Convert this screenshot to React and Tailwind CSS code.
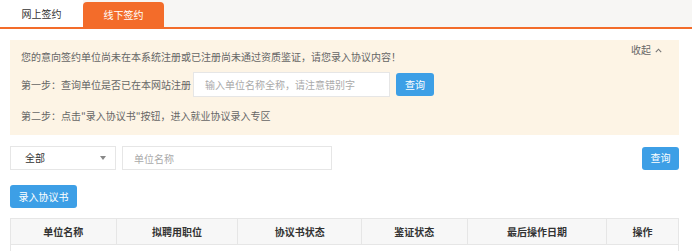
import React from 'react';

const columns = [
  { title: '单位名称', width: 'w-[106px]' },
  { title: '拟聘用职位', width: 'w-[122px]' },
  { title: '协议书状态', width: 'w-[124px]' },
  { title: '鉴证状态', width: 'w-[106px]' },
  { title: '最后操作日期', width: 'w-[140px]' },
  { title: '操作', width: 'w-[71px]' },
];

const App = () => {
  return (
    <div className="w-[692px] h-[251px] overflow-hidden bg-white text-[10px] leading-[14px] text-[#666] font-['Noto_Sans_CJK_SC',sans-serif]">
      {/* Tabs */}
      <div className="flex h-[29px] bg-[#f7f6f4] border-b-2 border-[#f36c2a]">
        <div className="w-[83px] h-[27px] bg-white flex items-center justify-center text-[#333]">网上签约</div>
        <div className="w-[81px] h-[25px] mt-[2px] bg-[#f36c2a] rounded-t-[4px] flex items-center justify-center text-white">线下签约</div>
      </div>

      <div className="ml-[10px] w-[669px]">
        {/* Notice */}
        <div className="relative mt-[11px] h-[95px] bg-[#fdf4e5] pl-[11px] pt-[10px]">
          <div className="absolute top-[3px] right-[17px] flex items-center gap-[4px] text-[#666]">
            <span>收起</span>
            <svg width="7" height="5" viewBox="0 0 7 5" fill="none" stroke="#777" strokeWidth="1.1">
              <path d="M0.8 4.2 L3.5 1.2 L6.2 4.2" />
            </svg>
          </div>
          <p>您的意向签约单位尚未在本系统注册或已注册尚未通过资质鉴证，请您录入协议内容！</p>
          <div className="flex items-center mt-[8px]">
            <span>第一步：查询单位是否已在本网站注册</span>
            <input
              className="ml-[2px] w-[197px] h-[25px] border border-[#e6e6e6] bg-white pl-[11px] outline-none text-[10px] placeholder:text-[#aaa]"
              placeholder="输入单位名称全称，请注意错别字"
            />
            <button className="ml-[6px] w-[38px] h-[23px] rounded-[3px] bg-[#3d9fe6] text-white">查询</button>
          </div>
          <p className="mt-[12px]">第二步：点击"录入协议书"按钮，进入就业协议录入专区</p>
        </div>

        {/* Filters */}
        <div className="flex items-center mt-[11px]">
          <div className="w-[106px] h-[24px] border border-[#e6e6e6] flex items-center justify-between pl-[14px] pr-[9px] text-[#333]">
            <span>全部</span>
            <svg width="6" height="4" viewBox="0 0 6 4"><path d="M0 0 H6 L3 4 Z" fill="#888" /></svg>
          </div>
          <input
            className="ml-[6px] w-[210px] h-[24px] border border-[#e6e6e6] pl-[11px] outline-none text-[10px] placeholder:text-[#aaa]"
            placeholder="单位名称"
          />
          <button className="ml-auto w-[37px] h-[23px] rounded-[3px] bg-[#3d9fe6] text-white">查询</button>
        </div>

        <button className="mt-[15px] w-[67px] h-[23px] rounded-[3px] bg-[#3d9fe6] text-white">录入协议书</button>

        {/* Table */}
        <div className="mt-[10px] border border-[#e6e6e6]">
          <div className="flex h-[26px] bg-[#f7f7f7] border-b border-[#e6e6e6]">
            {columns.map((col, index) => (
              <div
                key={index}
                className={`${col.width} flex items-center justify-center font-bold text-[#333] ${index < columns.length - 1 ? 'border-r border-[#e6e6e6]' : ''}`}
              >
                {col.title}
              </div>
            ))}
          </div>
          <div className="h-[30px]" />
        </div>
      </div>
    </div>
  );
};

export default App;
